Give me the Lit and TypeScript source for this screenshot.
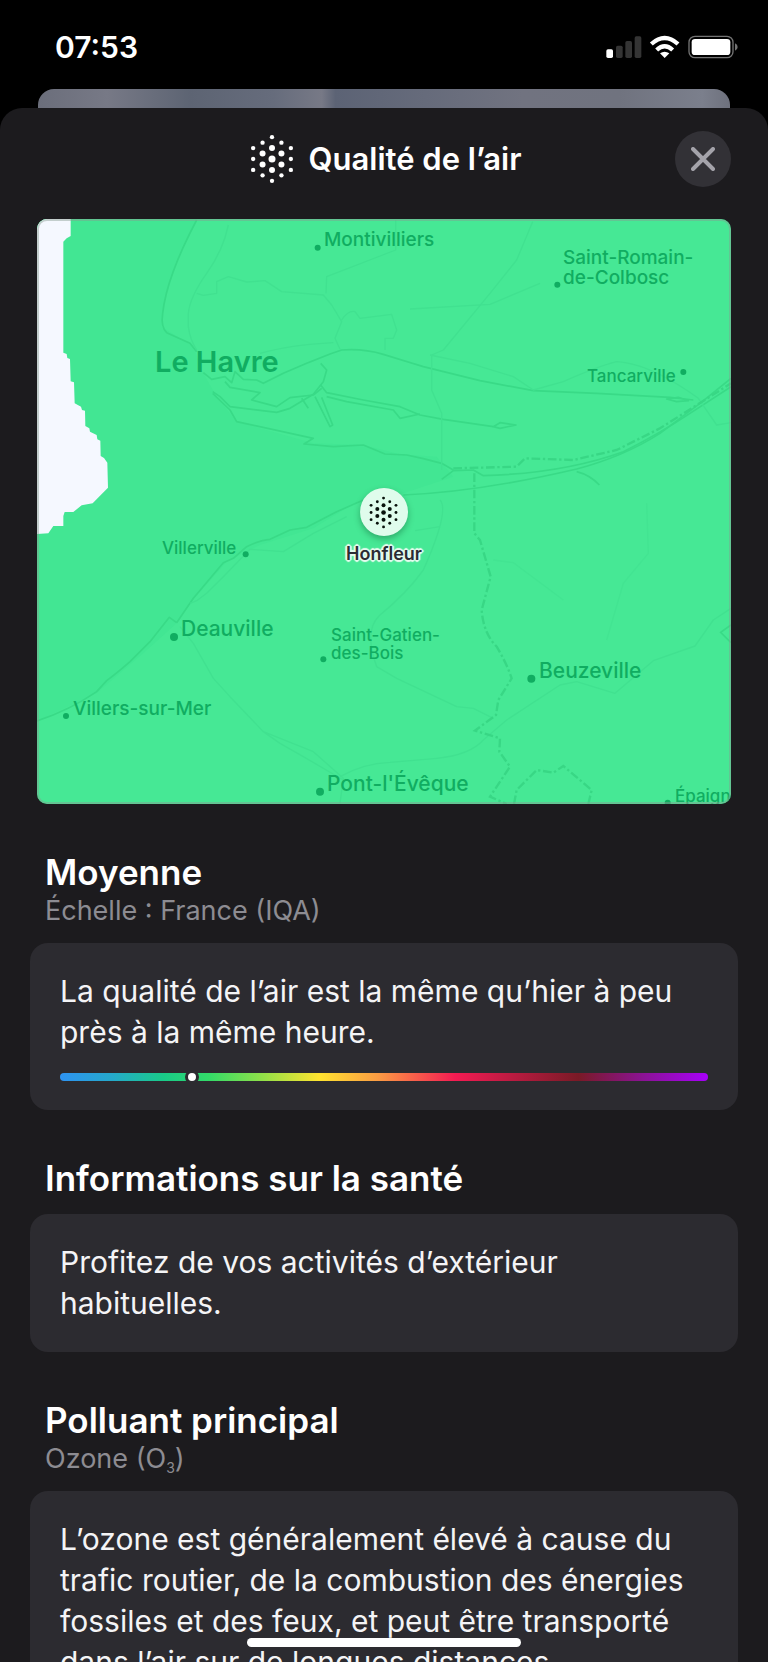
import { LitElement, html, css, svg } from "lit";
import { customElement, property } from "lit/decorators.js";
import { styleMap } from "lit/directives/style-map.js";

const MAP_W = 694;
const MAP_H = 585;

interface Place {
  lines: string[];
  x: number;
  y: number;
  size: "s" | "m" | "l" | "city";
}

// x / y: left edge and top of the label on the 694 x 585 map canvas
const places: Place[] = [
  { lines: ["Montivilliers"], x: 287, y: 11, size: "m" },
  { lines: ["Saint-Romain-", "de-Colbosc"], x: 526, y: 29, size: "m" },
  { lines: ["Tancarville"], x: 550, y: 148, size: "s" },
  { lines: ["Le Havre"], x: 118, y: 126, size: "city" },
  { lines: ["Villerville"], x: 125, y: 320, size: "s" },
  { lines: ["Deauville"], x: 144, y: 397, size: "l" },
  { lines: ["Saint-Gatien-", "des-Bois"], x: 294, y: 407, size: "s" },
  { lines: ["Villers-sur-Mer"], x: 36, y: 480, size: "m" },
  { lines: ["Beuzeville"], x: 502, y: 439, size: "l" },
  { lines: ["Pont-l'Évêque"], x: 290, y: 552, size: "l" },
  { lines: ["Épaign"], x: 638, y: 568, size: "s" },
];

// [cx, cy, r] in the drawing's own units (three per map pixel)
const dots = [
  [863, 113, 9], [1582, 224, 9], [1960, 486, 9], [647, 1033, 9], [432, 1281, 12],
  [880, 1348, 9], [108, 1518, 9], [1504, 1406, 12], [870, 1745, 12], [1913, 1778, 9],
];

@customElement("aqi-glyph")
class AqiGlyph extends LitElement {
  static styles = css`
    :host { display: block; }
    .glyph { display: block; width: 100%; height: 100%; fill: currentColor; }
  `;
  render() {
    const out = [];
    for (let c = -2; c <= 2; c++) {
      const n = 5 - Math.abs(c);
      for (let i = 0; i < n; i++) {
        const dy = i - (n - 1) / 2;
        const edge = Math.abs(c) === 2 || i === 0 || i === n - 1;
        const r = c === 0 && dy === 0 ? 10.5 : edge ? 6.5 : 9;
        out.push(svg`<circle cx=${c * 28.3} cy=${dy * 32.7} r=${r}></circle>`);
      }
    }
    return html`<svg class="glyph" viewBox="-75 -75 150 150" aria-hidden="true">${out}</svg>`;
  }
}

@customElement("air-map")
class AirMap extends LitElement {
  static styles = css`
    :host { display: block; }
    .map {
      position: relative;
      aspect-ratio: 694 / 585;
      border-radius: 10px;
      overflow: hidden;
      background: #46e895;
      color: #10ad61;
    }
    .map::after {
      content: "";
      position: absolute;
      inset: 0;
      border-radius: 10px;
      border: 2px solid rgba(135, 155, 145, 0.45);
      box-sizing: border-box;
    }
    .art { display: block; width: 100%; height: 100%; }
    .label { position: absolute; white-space: nowrap; font-weight: 500; }
    .s { font-size: 17px; line-height: 18px; }
    .m { font-size: 19px; line-height: 20px; }
    .l { font-size: 21px; line-height: 25px; }
    .city { font-size: 29px; line-height: 34px; font-weight: 600; }
    .line { display: block; }
    .pin {
      position: absolute;
      left: 50%;
      top: 269px;
      transform: translateX(-50%);
      display: flex;
      flex-direction: column;
      align-items: center;
      gap: 8px;
    }
    .bubble {
      width: 48px;
      height: 48px;
      border-radius: 50%;
      background: #dffcec;
      color: #07110b;
      display: grid;
      place-items: center;
      box-shadow: 0 3px 6px rgba(0, 60, 30, 0.35);
    }
    .mark { width: 33px; height: 33px; }
    .here {
      font-size: 18px;
      line-height: 20px;
      font-weight: 600;
      color: #2b2b33;
      text-shadow: 2px 0 1px #e6fbef, -2px 0 1px #e6fbef, 0 2px 1px #e6fbef, 0 -2px 1px #e6fbef,
        1px 1px 1px #e6fbef, -1px -1px 1px #e6fbef, 1px -1px 1px #e6fbef, -1px 1px 1px #e6fbef;
    }
  `;
  render() {
    return html`
      <div class="map">
        <svg class="art" viewBox="21 27 2082 1755" preserveAspectRatio="none" aria-hidden="true">
          <path fill="#42e693" d="M21 27H500Q400 200 395 350L490 410L520 490L560 560L620 635L850 700L1000 705L1110 733L1220 740L1270 800L1120 850L990 870L850 955L690 1005L590 1055L480 1180L440 1240L340 1330L200 1450L21 1533Z"></path>
          <path fill="#f5f8ff" d="M21 27H122V78L110 85L100 95V428L110 432L112 444L120 447L122 514L132 517L134 580L153 590L156 600L165 602L166 648L178 655L180 665L200 675L202 688L211 692L212 738L222 744L232 758L234 833L222 845L188 880L155 886L130 906H104L100 918V948H70L55 970L21 972Z"></path>
          <g fill="none" stroke="#39da87" stroke-width="5" stroke-linejoin="round">
            <path d="M500 30Q410 200 398 310Q392 350 410 368L480 400L500 425"></path>
            <path d="M520 488L545 508L585 500L605 518L615 485L640 508L680 510L700 520L760 490L830 460L900 432L935 420Q1000 415 1060 433L1180 470L1350 512L1510 542L1700 550L1920 562L1990 570"></path>
            <path d="M548 545L570 560L600 590L740 607L780 595L850 553L880 515L890 480L872 460"></path>
            <path d="M548 550L600 600L620 635L850 685L822 702L910 710L1000 705L1065 732L1130 735L1180 746L1235 760L1270 780"></path>
            <path d="M585 515L600 532L690 548L665 570L740 590L780 563L850 555L875 535"></path>
            <path d="M872 525L890 548L1000 570L1110 590L1170 615L1240 628L1390 650M890 560L950 575L1090 600L1110 625L1170 612"></path>
            <path d="M855 560L900 650L908 645L875 562M815 565L835 595"></path>
            <path d="M1390 650L1410 638L1458 645L1410 655Z"></path>
            <path d="M1235 808L1270 782L1330 780L1360 797Q1600 790 1780 725Q1890 670 1980 610L2103 530"></path>
            <path d="M1120 855Q1350 845 1640 777Q1780 740 1890 670L2010 580L2103 505"></path>
            <path d="M1640 785Q1680 795 1708 825M1910 567L1945 562L1975 572L1940 575Z"></path>
            <path d="M21 1533Q120 1500 200 1445L230 1412Q260 1390 300 1355L360 1295L418 1222L440 1238"></path>
            <path d="M440 1238L490 1165Q540 1105 580 1058L610 1045L650 1010Q690 990 720 988L780 960L830 952L920 905L1000 870"></path>
          </g>
          <g fill="none" stroke="#41e190" stroke-width="4" stroke-linejoin="round">
            <path d="M595 45Q580 120 530 190Q480 260 475 310V350Q480 390 500 420"></path>
            <path d="M500 250L520 256L560 250V215L595 200L650 216L705 212L755 245L880 255L905 285L935 335L915 385L930 418"></path>
            <path d="M1097 30V120L890 200L888 250M935 330Q955 300 975 305L990 325L1085 313L1100 360L1090 385H1065V420"></path>
            <path d="M690 430Q780 405 910 398M1508 35L1460 150L1380 250L1240 420L1205 435V540L1235 610V780"></path>
            <path d="M1140 297L1380 283L1530 220M1200 435L1320 460L1450 500L1510 540L1600 515Q1700 470 1760 455Q1860 460 2005 565L2060 645L2103 638"></path>
            <path d="M480 1180L500 1172L530 1150L580 1100L660 1018L760 1025L850 970L950 920"></path>
            <path d="M450 1250L490 1300L550 1405L600 1460L700 1565L750 1600L820 1640L940 1710M700 1565L850 1625L940 1705L930 1780"></path>
            <path d="M930 1700Q1000 1660 1080 1657L1220 1645Q1320 1635 1360 1590L1430 1530L1590 1425L1640 1415L1755 1450L1870 1352L1995 1308L2050 1230L2103 1195"></path>
            <path d="M1230 870Q1260 900 1180 1080Q1130 1150 1050 1215Q1000 1260 1040 1370L1100 1405L1280 1490L1330 1495L1390 1525"></path>
            <path d="M1155 962L1230 950"></path>
          </g>
          <g fill="none" stroke="#43e492" stroke-width="4">
            <path d="M1390 1050L1450 1058L1600 1170M1850 880L1855 1030L1780 1120L1730 1290"></path>
          </g>
          <path fill="none" stroke="#39da87" stroke-width="5" d="M2103 1245L2072 1267L2103 1298"></path>
          <g fill="none" stroke="#38d785" stroke-width="7" stroke-dasharray="26 8 7 8">
            <path d="M1270 775L1460 770L1485 745L1630 750L1760 720L1890 655L2103 520"></path>
            <path d="M1333 790V970L1350 990L1382 1100L1355 1200Q1360 1270 1400 1310Q1430 1360 1445 1405L1405 1470L1398 1515L1335 1562L1410 1585L1408 1625L1440 1670L1380 1760L1430 1782"></path>
            <path d="M1452 1782L1460 1740L1520 1680L1570 1688L1600 1668L1685 1740L1675 1782"></path>
          </g>
          <g fill="#10ad61">
            ${dots.map(([x, y, r]) => svg`<circle cx=${x} cy=${y} r=${r}></circle>`)}
          </g>
        </svg>
        ${places.map(
          (p) => html`<div
            class="label ${p.size}"
            style=${styleMap({ left: `${(p.x / MAP_W) * 100}%`, top: `${(p.y / MAP_H) * 100}%` })}
          >${p.lines.map((l) => html`<span class="line">${l}</span>`)}</div>`
        )}
        <div class="pin">
          <div class="bubble"><aqi-glyph class="mark"></aqi-glyph></div>
          <div class="here">Honfleur</div>
        </div>
      </div>
    `;
  }
}

@customElement("info-section")
class InfoSection extends LitElement {
  @property() heading = "";
  static styles = css`
    :host { display: block; padding: 48px 30px 0; }
    .title { margin: 0 15px; font-size: 35px; line-height: 40px; font-weight: 600; color: #fff; }
    ::slotted([slot="sub"]) {
      display: block;
      margin: 0 15px -3px;
      font-size: 27px;
      line-height: 38px;
      color: #8d8c92;
    }
    .card {
      margin-top: 16px;
      padding: 28px 30px;
      border-radius: 18px;
      background: #2c2b30;
      color: #f4f4f6;
      font-size: 30px;
      line-height: 41px;
    }
  `;
  render() {
    return html`
      <h2 class="title">${this.heading}</h2>
      <slot name="sub"></slot>
      <div class="card"><slot></slot></div>
    `;
  }
}

@customElement("app-root")
class AppRoot extends LitElement {
  @property({ type: Number }) level = 20.3;

  static styles = css`
    :host {
      display: flex;
      flex-direction: column;
      position: relative;
      height: 100vh;
      overflow: hidden;
      background: #000;
      color: #fff;
      font-family: Inter, "Liberation Sans", sans-serif;
    }
    .status {
      flex: none;
      display: flex;
      align-items: center;
      justify-content: space-between;
      height: 89px;
      padding: 4px 30px 0 55px;
      box-sizing: border-box;
    }
    .time { font-size: 30px; line-height: 36px; font-weight: 600; }
    .icons { display: block; width: 132px; height: 24px; }
    .behind {
      flex: none;
      height: 38px;
      margin: 0 38px -19px;
      border-radius: 16px 16px 0 0;
      background: linear-gradient(90deg, #6b6e7b 0%, #777986 10%, #5d6473 22%, #666c7c 34%, #777986 41%, #5c6375 43%, #666b7b 56%, #717380 70%, #70737f 84%, #7b7f8c 96%, #6e717d 100%);
    }
    .sheet {
      position: relative;
      flex: 1;
      min-height: 0;
      border-radius: 22px 22px 0 0;
      background: #1c1b1e;
      overflow: hidden auto;
      scrollbar-width: none;
    }
    .head {
      display: grid;
      grid-template-columns: 1fr auto 1fr;
      align-items: center;
      padding: 23px 37px 32px;
    }
    .name { grid-column: 2; display: flex; align-items: center; gap: 12px; }
    .logo { width: 50px; height: 50px; }
    .title { margin: 0; font-size: 31px; line-height: 40px; font-weight: 600; }
    .close {
      justify-self: end;
      width: 56px;
      height: 56px;
      padding: 0;
      border: 0;
      border-radius: 50%;
      background: #323136;
      color: #a4a3aa;
      display: grid;
      place-items: center;
    }
    .cross { width: 24px; height: 24px; fill: none; stroke: currentColor; stroke-width: 4; stroke-linecap: round; }
    .map { margin: 0 37px; }
    .text { margin: 0; }
    .scale {
      position: relative;
      height: 8px;
      margin: 20px 0 1px;
      border-radius: 4px;
      background: linear-gradient(90deg, #2e93f2 0%, #25a9cb 8%, #19cb88 16%, #33db68 23%, #8ee049 31%, #ffe32f 40%, #fb9c43 49%, #f41b52 61%, #b91b40 70%, #7a1a26 80%, #8b1394 90%, #a800fa 100%);
    }
    .needle {
      position: absolute;
      top: 50%;
      width: 8px;
      height: 8px;
      border: 3px solid #2c2b30;
      border-radius: 50%;
      background: #fff;
      transform: translate(-50%, -50%);
    }
    .small { font-size: 14px; line-height: 0; vertical-align: -5px; }
    .home {
      position: absolute;
      left: 50%;
      bottom: 15px;
      width: 274px;
      height: 9px;
      border-radius: 5px;
      background: #fff;
      transform: translateX(-50%);
    }
  `;

  render() {
    return html`
      <div class="status">
        <time class="time">07:53</time>
        <svg class="icons" viewBox="45 41 396 72" role="img" aria-label="Réseau, Wi-Fi et batterie">
          <rect x="46" y="84" width="20" height="26" rx="5" fill="#fff"></rect>
          <g fill="#343434">
            <rect x="75" y="73" width="20" height="37" rx="5"></rect>
            <rect x="103" y="59" width="20" height="51" rx="5"></rect>
            <rect x="131" y="45" width="20" height="65" rx="5"></rect>
          </g>
          <g fill="none" stroke="#fff" stroke-width="13">
            <path d="M181 68Q221 32 261 68"></path>
            <path d="M197 86Q221 64 245 86"></path>
          </g>
          <path fill="#fff" d="M221 110L207 96Q221 86 235 96Z"></path>
          <rect x="294" y="45" width="132" height="64" rx="18" fill="none" stroke="#737373" stroke-width="4"></rect>
          <rect x="302" y="53" width="116" height="48" rx="10" fill="#fff"></rect>
          <path fill="#737373" d="M432 66Q440 69 440 77T432 88Z"></path>
        </svg>
      </div>
      <div class="behind"></div>
      <main class="sheet">
        <header class="head">
          <div class="name">
            <aqi-glyph class="logo"></aqi-glyph>
            <h1 class="title">Qualité de l’air</h1>
          </div>
          <button class="close" aria-label="Fermer">
            <svg class="cross" viewBox="0 0 24 24" aria-hidden="true"><path d="M2 2L22 22M22 2L2 22"></path></svg>
          </button>
        </header>
        <air-map class="map"></air-map>
        <info-section heading="Moyenne">
          <span slot="sub">Échelle : France (IQA)</span>
          <p class="text">La qualité de l’air est la même qu’hier à peu près à la même heure.</p>
          <div class="scale" role="meter" aria-label="Indice de qualité de l’air" aria-valuemin="0" aria-valuemax="100" aria-valuenow=${this.level}>
            <span class="needle" style=${styleMap({ left: `${this.level}%` })}></span>
          </div>
        </info-section>
        <info-section heading="Informations sur la santé">
          <p class="text">Profitez de vos activités d’extérieur habituelles.</p>
        </info-section>
        <info-section heading="Polluant principal">
          <span slot="sub">Ozone (O<sub class="small">3</sub>)</span>
          <p class="text">L’ozone est généralement élevé à cause du trafic routier, de la combustion des énergies fossiles et des feux, et peut être transporté dans l’air sur de longues distances.</p>
        </info-section>
      </main>
      <div class="home"></div>
    `;
  }
}
